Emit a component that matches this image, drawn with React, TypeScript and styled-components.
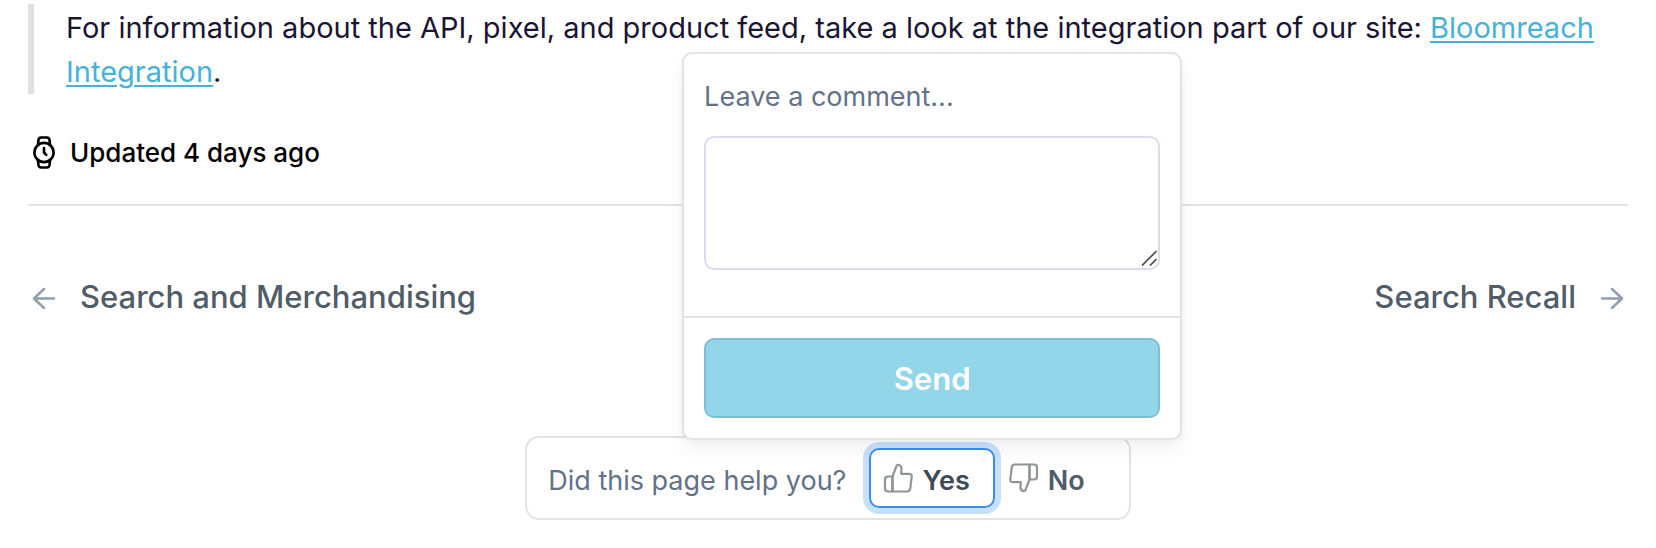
import React, { useState } from "react";
import styled, { createGlobalStyle, css } from "styled-components";

const GlobalStyle = createGlobalStyle`
  *, *::before, *::after { box-sizing: border-box; }
  body {
    margin: 0;
    background: #fff;
    color: #1b1534;
    font-family: Inter, "Liberation Sans", sans-serif;
  }
`;

const Page = styled.main`
  padding: 4px 28px 28px;
`;

const Quote = styled.blockquote`
  margin: 0;
  padding: 2px 0 0 32px;
  border-left: 6px solid #dee2e6;
  font-size: 29px;
  line-height: 44px;
`;

const QuoteLink = styled.a`
  color: #47b1d9;
  text-decoration: underline;
  text-decoration-thickness: 2px;
  text-underline-offset: 3px;
`;

const Updated = styled.div`
  display: flex;
  align-items: center;
  gap: 14px;
  margin-top: 40px;
  padding: 0 2px;
  color: #000;
  font-size: 26px;
  font-weight: 500;
  line-height: 38px;
`;

const Divider = styled.hr`
  height: 2px;
  margin: 32px 0 0;
  border: 0;
  background: #e3e3e3;
`;

const Pager = styled.nav`
  display: flex;
  justify-content: space-between;
  margin-top: 69px;
`;

const PagerLink = styled.a`
  display: flex;
  align-items: center;
  gap: 24px;
  padding: 0 4px;
  color: #515c69;
  font-size: 31px;
  font-weight: 500;
  line-height: 44px;
  text-decoration: none;
`;

const ArrowIcon = styled.svg`
  flex: none;
  width: 24px;
  height: 24px;
  fill: none;
  stroke: #919db0;
  stroke-width: 2.5;
  stroke-linecap: round;
  stroke-linejoin: round;
`;

const WatchIcon = styled.svg`
  flex: none;
  width: 26px;
  height: 34px;
  fill: none;
  stroke: #000;
  stroke-width: 2.6;
  stroke-linecap: round;
  stroke-linejoin: round;
`;

const HelpBar = styled.section`
  display: flex;
  align-items: center;
  width: fit-content;
  margin: 117px auto 0;
  padding: 10px 19px 10px 21px;
  border: 2px solid #e3e3e3;
  border-radius: 14px;
`;

const HelpText = styled.span`
  margin-right: 23px;
  padding-top: 5px;
  color: #637288;
  font-size: 27px;
  line-height: 40px;
`;

const VoteWrap = styled.div`
  position: relative;
`;

const VoteButton = styled.button<{ $active: boolean }>`
  display: flex;
  align-items: center;
  gap: 9px;
  height: 60px;
  padding: 0 23px 0 12px;
  border: 2px solid transparent;
  border-radius: 10px;
  background: transparent;
  color: #515c69;
  font: 600 27px/40px Inter, "Liberation Sans", sans-serif;
  cursor: pointer;
  ${({ $active }) =>
    $active &&
    css`
      border-color: #3b8cf2;
      color: #404a56;
      box-shadow: 0 0 0 6px #c7e1fd;
    `}
`;

const VoteLabel = styled.span`
  padding-top: 5px;
`;

const ThumbIcon = styled.svg`
  flex: none;
  width: 30px;
  height: 30px;
  fill: none;
  stroke: #8f9498;
  stroke-width: 2.2;
  stroke-linejoin: round;
  stroke-linecap: round;
`;

const Popover = styled.form`
  position: absolute;
  bottom: calc(100% + 8px);
  left: 50%;
  z-index: 1;
  width: 500px;
  transform: translateX(-50%);
  border: 2px solid #e3e3e3;
  border-radius: 10px;
  background: #fff;
  box-shadow: 0 10px 20px rgba(0, 0, 0, 0.05), 0 2px 6px rgba(0, 0, 0, 0.03);
`;

const CommentArea = styled.div`
  padding: 21px 20px 46px;
`;

const CommentLabel = styled.label`
  display: block;
  margin-bottom: 17px;
  color: #637288;
  font-size: 27px;
  line-height: 44px;
`;

const FieldWrap = styled.div`
  position: relative;
  display: flex;
`;

const CommentBox = styled.textarea`
  width: 100%;
  height: 134px;
  padding: 12px;
  border: 2px solid #dadcee;
  border-radius: 10px;
  background: #fff;
  color: #1b1534;
  font: 400 24px/32px Inter, "Liberation Sans", sans-serif;
  resize: none;
  outline: none;
`;

const ResizeGrip = styled.svg`
  position: absolute;
  right: 3px;
  bottom: 4px;
  width: 16px;
  height: 16px;
  fill: none;
  stroke: #4d4d4d;
  stroke-width: 1.7;
  pointer-events: none;
`;

const PopoverFooter = styled.div`
  padding: 20px;
  border-top: 2px solid #e3e3e3;
`;

const SendButton = styled.button`
  display: block;
  width: 100%;
  height: 80px;
  padding: 2px 20px 0;
  border: 2px solid #80bfd2;
  border-radius: 10px;
  background: #93d6e9;
  color: #fff;
  font: 600 31px/40px Inter, "Liberation Sans", sans-serif;
  cursor: pointer;
`;

function Thumb({ down = false }: { down?: boolean }) {
  return (
    <ThumbIcon viewBox="0 0 30 30" aria-hidden="true">
      <g transform={down ? "rotate(180 15 15)" : undefined}>
        <path d="M9.5 13.500H5Q2 13.500 2 16.500v9q0 3 3 3h4.500z" />
        <path d="M9.500 13.500 13.600 2.800q.5-1.300 1.900-1 3.200.8 3 4.200l-.3 4.800h7.500q3.400 0 3 3l-1.500 11.900q-.4 2.800-3.200 2.800H9.500z" />
      </g>
    </ThumbIcon>
  );
}

export default function App() {
  const [vote, setVote] = useState<"yes" | "no">("yes");
  return (
    <>
      <GlobalStyle />
      <Page>
        <Quote>
          For information about the API, pixel, and product feed, take a look at the integration
          part of our site: <QuoteLink href="#integration">Bloomreach Integration</QuoteLink>.
        </Quote>
        <Updated>
          <WatchIcon viewBox="0 0 26 34" aria-hidden="true">
            <circle cx="14" cy="16.500" r="9.600" />
            <path d="M8 8.500 8.400 4.500Q8.800 1.500 11 1.500h6q2.200 0 2.600 3l.4 4M8 24.500l.4 4Q8.800 31.500 11 31.500h6q2.200 0 2.600-3l.4-4M14 12v4.500l2.300 2.300" />
          </WatchIcon>
          Updated 4 days ago
        </Updated>
        <Divider />
        <Pager aria-label="Pages">
          <PagerLink href="#search-and-merchandising">
            <ArrowIcon viewBox="0 0 24 24" aria-hidden="true">
              <path d="M22 13.500H2M12 4 2 13.500l10 9.500" />
            </ArrowIcon>
            Search and Merchandising
          </PagerLink>
          <PagerLink href="#search-recall">
            Search Recall
            <ArrowIcon viewBox="0 0 24 24" aria-hidden="true">
              <path d="M2 13.500h20M12 4l10 9.500-10 9.500" />
            </ArrowIcon>
          </PagerLink>
        </Pager>
        <HelpBar>
          <HelpText>Did this page help you?</HelpText>
          <VoteWrap>
            <VoteButton type="button" $active={vote === "yes"} onClick={() => setVote("yes")}>
              <Thumb />
              <VoteLabel>Yes</VoteLabel>
            </VoteButton>
            <Popover onSubmit={(event) => event.preventDefault()}>
              <CommentArea>
                <CommentLabel htmlFor="comment">Leave a comment...</CommentLabel>
                <FieldWrap>
                  <CommentBox id="comment" />
                  <ResizeGrip viewBox="0 0 16 16" aria-hidden="true">
                    <path d="M1 15.500 15.500 1M9 15.500 15.500 9" />
                  </ResizeGrip>
                </FieldWrap>
              </CommentArea>
              <PopoverFooter>
                <SendButton type="submit">Send</SendButton>
              </PopoverFooter>
            </Popover>
          </VoteWrap>
          <VoteButton type="button" $active={vote === "no"} onClick={() => setVote("no")}>
            <Thumb down />
            <VoteLabel>No</VoteLabel>
          </VoteButton>
        </HelpBar>
      </Page>
    </>
  );
}
